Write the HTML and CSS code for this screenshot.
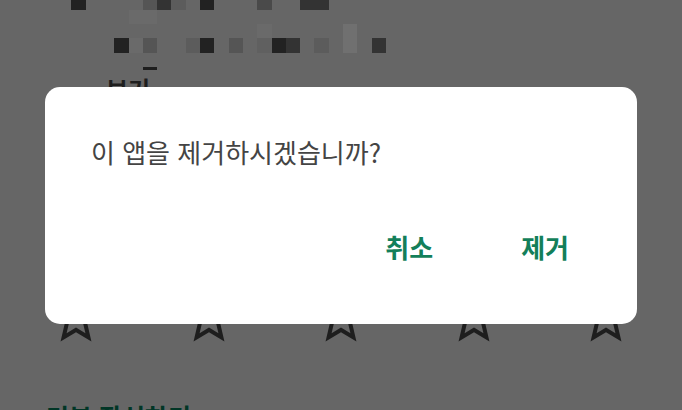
FILE: index.html
```html
<!DOCTYPE html>
<html lang="ko">
<head>
<meta charset="utf-8">
<link rel="stylesheet" href="styles.css">
</head>
<body>
<div class="page">
  <div class="mosaic">
    <i class="c k1" style="grid-area:1/1"></i>
    <i class="c k4" style="grid-area:1/6"></i>
    <i class="c k2" style="grid-area:1/7"></i>
    <i class="c k5" style="grid-area:1/8"></i>
    <i class="c k1" style="grid-area:1/10"></i>
    <i class="c k3" style="grid-area:1/14"></i>
    <i class="c k2" style="grid-area:1/17"></i>
    <i class="c k2" style="grid-area:1/18"></i>
    <i class="c l1" style="grid-area:2/5"></i>
    <i class="c l1" style="grid-area:2/6"></i>
    <i class="c l1" style="grid-area:3/14"></i>
    <i class="c l2" style="grid-area:3/20"></i>
    <i class="c k1" style="grid-area:4/4"></i>
    <i class="c l1" style="grid-area:4/5"></i>
    <i class="c k4" style="grid-area:4/6"></i>
    <i class="c k5" style="grid-area:4/9"></i>
    <i class="c k1" style="grid-area:4/10"></i>
    <i class="c k4" style="grid-area:4/12"></i>
    <i class="c k6" style="grid-area:4/14"></i>
    <i class="c k1" style="grid-area:4/15"></i>
    <i class="c k2" style="grid-area:4/16"></i>
    <i class="c k5" style="grid-area:4/18"></i>
    <i class="c l2" style="grid-area:4/20"></i>
    <i class="c k2" style="grid-area:4/22"></i>
  </div>
  <div class="dash"></div>
  <div class="see">보기</div>
  <div class="stars">
    <svg viewBox="0 0 24 24"><path d="M22 9.24l-7.19-.62L12 2 9.19 8.63 2 9.24l5.46 4.73L5.82 21 12 17.27 18.18 21l-1.63-7.03L22 9.24zM12 15.4l-3.76 2.27 1-4.28-3.32-2.88 4.38-.38L12 6.1l1.710 4.04 4.38.38-3.32 2.88 1 4.28L12 15.4z"/></svg>
    <svg viewBox="0 0 24 24"><path d="M22 9.24l-7.19-.62L12 2 9.19 8.63 2 9.24l5.46 4.73L5.82 21 12 17.27 18.18 21l-1.63-7.03L22 9.24zM12 15.4l-3.76 2.27 1-4.28-3.32-2.88 4.38-.38L12 6.1l1.710 4.04 4.38.38-3.32 2.88 1 4.28L12 15.4z"/></svg>
    <svg viewBox="0 0 24 24"><path d="M22 9.24l-7.19-.62L12 2 9.19 8.63 2 9.24l5.46 4.73L5.82 21 12 17.27 18.18 21l-1.63-7.03L22 9.24zM12 15.4l-3.76 2.27 1-4.28-3.32-2.88 4.38-.38L12 6.1l1.710 4.04 4.38.38-3.32 2.88 1 4.28L12 15.4z"/></svg>
    <svg viewBox="0 0 24 24"><path d="M22 9.24l-7.19-.62L12 2 9.19 8.63 2 9.24l5.46 4.73L5.82 21 12 17.27 18.18 21l-1.63-7.03L22 9.24zM12 15.4l-3.76 2.27 1-4.28-3.32-2.88 4.38-.38L12 6.1l1.710 4.04 4.38.38-3.32 2.88 1 4.28L12 15.4z"/></svg>
    <svg viewBox="0 0 24 24"><path d="M22 9.24l-7.19-.62L12 2 9.19 8.63 2 9.24l5.46 4.73L5.82 21 12 17.27 18.18 21l-1.63-7.03L22 9.24zM12 15.4l-3.76 2.27 1-4.28-3.32-2.88 4.38-.38L12 6.1l1.710 4.04 4.38.38-3.32 2.88 1 4.28L12 15.4z"/></svg>
  </div>
  <div class="review">리뷰 작성하기</div>
</div>
<div class="scrim">
  <div class="dialog">
    <p class="title">이 앱을 제거하시겠습니까?</p>
    <div class="actions">
      <span class="btn">취소</span>
      <span class="btn">제거</span>
    </div>
  </div>
</div>
</body>
</html>
```

FILE: styles.css
```css
html, body {
  margin: 0;
  padding: 0;
  width: 682px;
  height: 410px;
  overflow: hidden;
  background: #666666;
  font-family: "Noto Sans CJK KR", "Noto Sans", sans-serif;
}
.page {
  width: 682px;
  height: 410px;
  overflow: hidden;
}
.mosaic {
  display: grid;
  grid-template-columns: repeat(22, 14.3px);
  grid-template-rows: repeat(4, 14.3px);
  margin-left: 71.4px;
  margin-top: -4.6px;
}
.c { display: block; }
.k1 { background: #222222; }
.k2 { background: #333333; }
.k3 { background: #4a4a4a; }
.k4 { background: #555555; }
.k5 { background: #5c5c5c; }
.k6 { background: #606060; }
.l1 { background: #6a6a6a; }
.l2 { background: #707070; }
.dash {
  width: 14px;
  height: 3px;
  background: #1e1e1e;
  margin: 14px 0 0 143px;
}
.see {
  margin: 5px 0 0 106px;
  font-size: 24px;
  line-height: 28px;
  font-weight: 700;
  color: #1e1e1e;
}
.stars {
  display: flex;
  justify-content: space-between;
  padding: 0 46px;
  margin-top: 186px;
}
.stars svg {
  width: 60px;
  height: 60px;
  fill: #1e1e1e;
}
.review {
  margin: 52px 0 0 46px;
  font-size: 25px;
  line-height: 30px;
  font-weight: 700;
  color: #013626;
}
.scrim {
  position: fixed;
  inset: 0;
  display: flex;
  align-items: center;
  justify-content: center;
}
.dialog {
  width: 592px;
  height: 237px;
  box-sizing: border-box;
  background: #ffffff;
  border-radius: 15px;
  padding: 47px 68px 0 46px;
}
.title {
  margin: 0;
  font-size: 26px;
  line-height: 36px;
  color: #444444;
}
.actions {
  display: flex;
  justify-content: flex-end;
  gap: 88px;
  margin-top: 62px;
}
.btn {
  font-size: 26px;
  line-height: 30px;
  font-weight: 700;
  color: #137f5a;
}
```
